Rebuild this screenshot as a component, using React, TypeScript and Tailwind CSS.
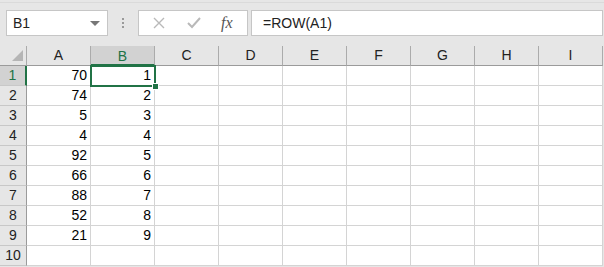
import React from 'react';

const cols = ['A', 'B', 'C', 'D', 'E', 'F', 'G', 'H', 'I'];
const colA = [70, 74, 5, 4, 92, 66, 88, 52, 21];

function HeaderRow() {
  return (
    <div className="flex h-[20px]">
      <div className="relative w-[27px] h-[20px] border-r border-b border-r-[#ababab] border-b-[#9b9b9b] bg-[#e6e6e6]">
        <svg className="absolute right-[3px] bottom-[4px]" width="11" height="11" viewBox="0 0 11 11">
          <polygon points="11,0 11,11 0,11" fill="#b5b5b5" />
        </svg>
      </div>
      {cols.map((c) => {
        const sel = c === 'B';
        return (
          <div
            key={c}
            className={
              sel
                ? 'w-[64px] h-[20px] flex items-center justify-center bg-[#d2d2d2] border-r border-r-[#ababab] border-b-2 border-b-[#217346] text-[#217346] text-[14px] pt-[2px]'
                : 'w-[64px] h-[20px] flex items-center justify-center bg-[#e6e6e6] border-r border-r-[#ababab] border-b border-b-[#9b9b9b] text-[#222] text-[14px]'
            }
          >
            {c}
          </div>
        );
      })}
    </div>
  );
}

function DataRow({ n }: { n: number }) {
  const sel = n === 1;
  const a = n <= 9 ? colA[n - 1] : '';
  const b = n <= 9 ? n : '';
  return (
    <div className="flex h-[20px]">
      <div
        className={
          sel
            ? 'w-[27px] h-[20px] flex items-center justify-center bg-[#d2d2d2] border-r-2 border-r-[#217346] border-b border-b-[#c8c8c8] text-[#217346] text-[14px]'
            : 'w-[27px] h-[20px] flex items-center justify-center bg-[#e6e6e6] border-r border-r-[#9b9b9b] border-b border-b-[#c8c8c8] text-[#222] text-[14px]'
        }
      >
        {n}
      </div>
      {cols.map((c) => (
        <div
          key={c}
          className="w-[64px] h-[20px] bg-white border-r border-b border-[#d4d4d4] flex items-center justify-end pr-[3px] text-[14px] text-black"
        >
          {c === 'A' ? a : c === 'B' ? b : ''}
        </div>
      ))}
    </div>
  );
}

export default function App() {
  return (
    <div
      className="w-[604px] h-[267px] bg-[#e6e6e6] overflow-hidden"
      style={{ fontFamily: '"Liberation Sans", Arial, sans-serif' }}
    >
      <div className="h-[3px] border-b border-[#dadada]" />
      <div className="flex items-center mt-[7px] h-[26px]">
        <div className="ml-[6px] w-[102px] h-[26px] bg-white border border-[#c6c6c6] flex items-center pl-[6px] pr-[7px] text-[14px] text-[#222]">
          <span className="flex-1">B1</span>
          <div className="w-0 h-0 border-l-[5px] border-r-[5px] border-t-[5px] border-l-transparent border-r-transparent border-t-[#777]" />
        </div>
        <div className="w-[30px] flex flex-col items-center gap-[2px]">
          <div className="w-[2px] h-[2px] bg-[#999]" />
          <div className="w-[2px] h-[2px] bg-[#999]" />
          <div className="w-[2px] h-[2px] bg-[#999]" />
        </div>
        <div className="w-[110px] h-[26px] bg-white border border-[#c6c6c6] flex items-center">
          <svg className="ml-[14px]" width="12" height="12" viewBox="0 0 12 12">
            <path d="M1 1 L11 11 M11 1 L1 11" stroke="#b9b9b9" strokeWidth="1.4" />
          </svg>
          <svg className="ml-[22px]" width="14" height="12" viewBox="0 0 14 12">
            <path d="M1 6 L5 10 L13 1" stroke="#b9b9b9" strokeWidth="2" fill="none" />
          </svg>
          <span
            className="ml-[20px] text-[16px] italic text-[#555]"
            style={{ fontFamily: '"Liberation Serif", "Times New Roman", serif' }}
          >
            fx
          </span>
        </div>
        <div className="ml-[3px] flex-1 mr-[1px] h-[26px] bg-white border border-[#c6c6c6] flex items-center pl-[11px] text-[14px] text-[#222]">
          =ROW(A1)
        </div>
      </div>
      <div className="mt-[10px] relative">
        <HeaderRow />
        {Array.from({ length: 10 }, (_, i) => (
          <DataRow key={i} n={i + 1} />
        ))}
        <div className="absolute left-[90px] top-[19px] w-[66px] h-[22px] border-2 border-[#217346] pointer-events-none" />
        <div className="absolute left-[152px] top-[37px] w-[7px] h-[7px] bg-[#217346] border border-white pointer-events-none" />
      </div>
    </div>
  );
}
